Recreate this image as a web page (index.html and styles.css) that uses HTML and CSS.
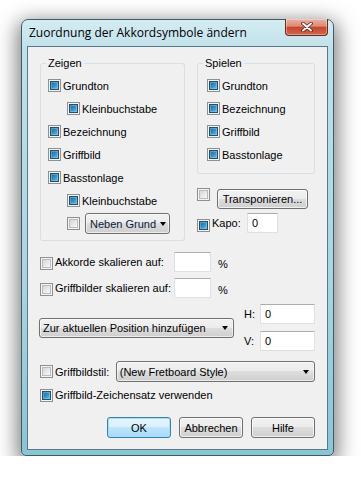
FILE: index.html
```html
<!DOCTYPE html>
<html lang="de">
<head>
    <meta charset="UTF-8">
    <title>Zuordnung der Akkordsymbole ändern</title>
    <link rel="stylesheet" href="styles.css">
</head>
<body>
    <div class="window">
        <div class="titlebar">
            <span class="title">Zuordnung der Akkordsymbole ändern</span>
            <button class="close" type="button">
                <svg width="14" height="10" viewBox="0 0 14 10">
                    <path d="M3 1.5 L11 8.5 M11 1.5 L3 8.5" stroke="#5b2117" stroke-width="3.6" stroke-linecap="round"/>
                    <path d="M3 1.5 L11 8.5 M11 1.5 L3 8.5" stroke="#fff" stroke-width="2" stroke-linecap="round"/>
                </svg>
            </button>
        </div>

        <div class="client">
            <div class="top">
                <!-- Zeigen -->
                <div class="group group-show">
                    <div class="group-title">Zeigen</div>
                    <div class="group-rows">
                        <div class="row"><span class="cb on"></span><span>Grundton</span></div>
                        <div class="row indent"><span class="cb on"></span><span>Kleinbuchstabe</span></div>
                        <div class="row"><span class="cb on"></span><span>Bezeichnung</span></div>
                        <div class="row"><span class="cb on"></span><span>Griffbild</span></div>
                        <div class="row"><span class="cb on"></span><span>Basstonlage</span></div>
                        <div class="row indent"><span class="cb on"></span><span>Kleinbuchstabe</span></div>
                        <div class="row indent">
                            <span class="cb"></span>
                            <div class="combo combo-small"><span>Neben Grund</span></div>
                        </div>
                    </div>
                </div>

                <div class="side">
                    <!-- Spielen -->
                    <div class="group group-play">
                        <div class="group-title">Spielen</div>
                        <div class="group-rows">
                            <div class="row"><span class="cb on"></span><span>Grundton</span></div>
                            <div class="row"><span class="cb on"></span><span>Bezeichnung</span></div>
                            <div class="row"><span class="cb on"></span><span>Griffbild</span></div>
                            <div class="row"><span class="cb on"></span><span>Basstonlage</span></div>
                        </div>
                    </div>
                    <div class="transp">
                        <span class="cb"></span>
                        <button class="btn btn-transp" type="button">Transponieren...</button>
                    </div>
                    <div class="kapo">
                        <span class="cb on"></span>
                        <span class="kapo-label">Kapo:</span>
                        <input class="field field-kapo" type="text" value="0">
                    </div>
                </div>
            </div>

            <div class="scale">
                <span class="cb"></span>
                <span class="scale-label">Akkorde skalieren auf:</span>
                <input class="field field-pct" type="text" value="">
                <span class="pct">%</span>
            </div>
            <div class="scale scale-second">
                <span class="cb"></span>
                <span class="scale-label">Griffbilder skalieren auf:</span>
                <input class="field field-pct" type="text" value="">
                <span class="pct">%</span>
            </div>

            <div class="position">
                <div class="combo combo-wide"><span>Zur aktuellen Position hinzufügen</span></div>
                <div class="offsets">
                    <span>H:</span>
                    <input class="field field-offset" type="text" value="0">
                    <span>V:</span>
                    <input class="field field-offset" type="text" value="0">
                </div>
            </div>

            <div class="style-row">
                <span class="cb"></span>
                <span class="style-label">Griffbildstil:</span>
                <div class="combo combo-style"><span>(New Fretboard Style)</span></div>
            </div>
            <div class="font-row">
                <span class="cb on"></span>
                <span>Griffbild-Zeichensatz verwenden</span>
            </div>

            <div class="actions">
                <button class="btn btn-default" type="button">OK</button>
                <button class="btn" type="button">Abbrechen</button>
                <button class="btn" type="button">Hilfe</button>
            </div>
        </div>
    </div>
</body>
</html>
```

FILE: styles.css
```css
* {
    box-sizing: border-box;
}
body {
    margin: 0;
    background: #fff;
    font-family: Tahoma, "Liberation Sans", Arial, sans-serif;
    font-size: 11px;
    color: #000;
}
.window {
    width: 313px;
    height: 437px;
    margin: 19px 0 0 21px;
    display: flex;
    flex-direction: column;
    border: 1px solid #3d5c69;
    border-radius: 7px 7px 5px 5px;
    background: linear-gradient(#d4ecf2 0, #bfe1ea 30px, #a8d5e1 60%, #8ac5d5 100%);
    box-shadow: 0 6px 20px 4px rgba(0,0,0,0.5);
}
.titlebar {
    height: 26px;
    display: flex;
    align-items: flex-start;
    padding-left: 7px;
}
.title {
    font-family: "Open Sans", "Liberation Sans", sans-serif;
    font-size: 12px;
    line-height: 25px;
    color: #000;
}
.close {
    margin: -1px 5px 0 auto;
    width: 43px;
    height: 17px;
    padding: 0;
    display: flex;
    align-items: center;
    justify-content: center;
    border: 1px solid #6a2a1e;
    border-top: none;
    border-radius: 0 0 4px 4px;
    background: linear-gradient(#e9b1a3 0, #dc8a74 45%, #c8452d 52%, #d2674b 100%);
    box-shadow: inset 0 0 0 1px rgba(255,255,255,0.35);
}
.client {
    flex: 1;
    margin: 0 5px 5px;
    padding: 16px 12px 0;
    border: 1px solid #58798a;
    background: #f0f0f0;
}

/* top part: two group boxes */
.top {
    display: grid;
    grid-template-columns: 145px 118px;
    column-gap: 12px;
    align-items: start;
}
.group {
    border: 1px solid #d5dfe5;
    border-radius: 3px;
}
.group-show {
    height: 178px;
}
.group-play {
    height: 111px;
}
.group-title {
    width: fit-content;
    margin: -8px 0 0 5px;
    padding: 0 2px;
    line-height: 14px;
    background: #f0f0f0;
}
.group-rows {
    padding: 4px 7px 0;
}
.group-play .group-rows {
    padding-left: 9px;
}
.row {
    display: flex;
    align-items: center;
    gap: 2px;
    height: 23px;
}
.indent {
    padding-left: 19px;
}

/* checkboxes */
.cb {
    position: relative;
    flex: none;
    width: 13px;
    height: 13px;
    border: 1px solid #8e8f8f;
    background: #f4f4f4;
}
.cb::after {
    content: "";
    position: absolute;
    inset: 1px;
    border: 1px solid #b8bcc0;
    background: linear-gradient(135deg, #d4d6d9, #f9f9f9);
}
.cb.on::after {
    border-color: #1f4f73;
    background: linear-gradient(135deg, #1f5f8e 0, #3a93c6 55%, #6cc2e6 100%);
    box-shadow: inset 0 0 0 1px rgba(140,210,240,0.45);
}

/* combo boxes */
.combo {
    display: flex;
    align-items: center;
    justify-content: space-between;
    padding: 0 5px 0 3px;
    border: 1px solid #707070;
    border-radius: 3px;
    background: linear-gradient(#f2f2f2 0, #ebebeb 50%, #dddddd 50%, #cfcfcf 100%);
    box-shadow: inset 0 0 0 1px rgba(255,255,255,0.6);
    white-space: nowrap;
}
.combo::after {
    content: "";
    flex: none;
    border-left: 3.5px solid transparent;
    border-right: 3.5px solid transparent;
    border-top: 4px solid #000;
}
.combo-small {
    margin-left: 3px;
    width: 85px;
    height: 21px;
    padding-left: 4px;
    padding-right: 3px;
    color: #0d1a3a;
}
.combo-wide {
    margin-left: -1px;
    width: 197px;
    height: 20px;
}
.combo-style {
    width: 200px;
    height: 21px;
}

/* buttons */
.btn {
    height: 21px;
    padding: 0;
    font: inherit;
    color: #000;
    border: 1px solid #707070;
    border-radius: 3px;
    background: linear-gradient(#f2f2f2 0, #ebebeb 50%, #dddddd 50%, #cfcfcf 100%);
    box-shadow: inset 0 0 0 1px rgba(255,255,255,0.7);
}
.btn-default {
    border-color: #3c7fb1;
    background: linear-gradient(#eaf6fd 0, #d9f0fc 50%, #bee6fd 50%, #a7d9f5 100%);
    box-shadow: inset 0 0 0 1px #9fe0fb;
}
.btn-transp {
    width: 91px;
    height: 20px;
    margin-top: 1px;
}

/* text fields */
.field {
    height: 20px;
    padding: 0 4px;
    font: inherit;
    color: #000;
    border: 1px solid #dbe1e6;
    border-top-color: #abadb3;
    border-radius: 1px;
    background: #fff;
    outline: none;
}

/* right column under Spielen */
.side {
    display: flex;
    flex-direction: column;
}
.transp {
    display: flex;
    align-items: flex-start;
    gap: 7px;
    margin-top: 14px;
    height: 21px;
}
.kapo {
    display: flex;
    align-items: center;
    gap: 2px;
    margin-top: 4px;
    height: 20px;
}
.kapo .cb {
    margin-top: 5px;
}
.kapo-label {
    width: 33px;
}
.field-kapo {
    width: 31px;
}

/* scaling rows */
.scale {
    display: flex;
    align-items: center;
    gap: 2px;
    margin-top: 11px;
    height: 20px;
}
.scale-second {
    margin-top: 6px;
}
.scale .cb {
    margin-top: 2px;
}
.scale-label {
    width: 117px;
}
.field-pct {
    width: 37px;
}
.pct {
    margin-left: 5px;
    padding-top: 3px;
}

/* insert position + offsets */
.position {
    display: flex;
    align-items: center;
    margin-top: 6px;
}
.offsets {
    display: grid;
    grid-template-columns: 16px 55px;
    row-gap: 7px;
    align-items: center;
    margin-left: 10px;
}
.field-offset {
    width: 55px;
}

.style-row {
    display: flex;
    align-items: center;
    gap: 2px;
    margin-top: 10px;
    height: 21px;
}
.style-label {
    width: 59px;
}
.font-row {
    display: flex;
    align-items: center;
    gap: 2px;
    margin-top: 3px;
    height: 20px;
}

.actions {
    display: flex;
    justify-content: flex-end;
    gap: 8px;
    margin-top: 12px;
}
.actions .btn {
    width: 64px;
}
```
